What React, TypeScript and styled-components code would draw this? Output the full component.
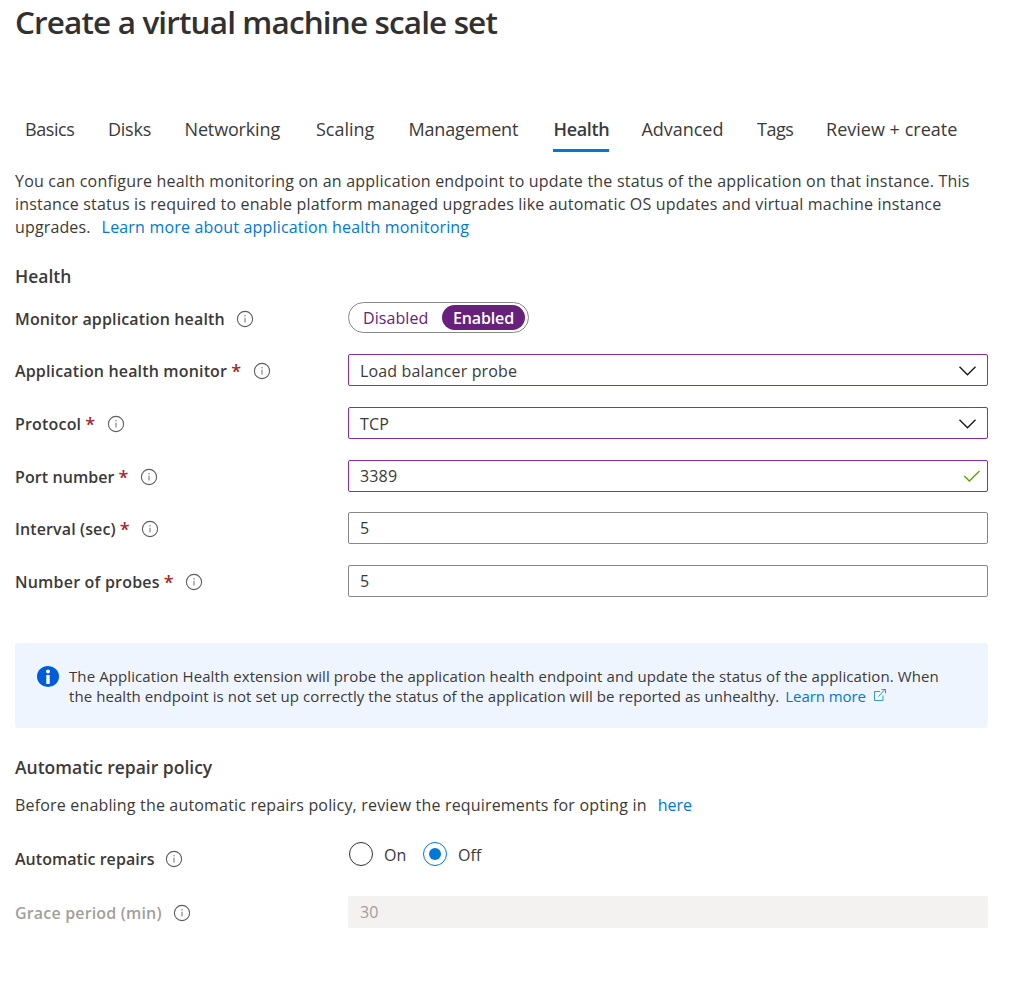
import React from 'react';
import styled, { createGlobalStyle, css } from 'styled-components';

const GlobalStyle = createGlobalStyle`
  *, *::before, *::after { box-sizing: border-box; }
  html, body { margin: 0; background: #fff; }
  body {
    color: #3b3a39;
    font-family: 'Open Sans', 'Noto Sans', sans-serif;
    font-size: 16px;
    font-weight: 400;
  }
`;

const Page = styled.main`
  width: 1025px;
  min-height: 990px;
  padding: 0 37px 0 15px;
  display: flex;
  flex-direction: column;
`;

const Title = styled.h1`
  margin: 0;
  height: 44px;
  color: #323130;
  font-size: 31.5px;
  line-height: 44px;
  font-weight: 600;
  letter-spacing: -0.87px;
  white-space: nowrap;
`;

const Tabs = styled.nav`
  display: flex;
  margin: 70px 0 0 9px;
  height: 38px;
`;

const Tab = styled.a<{ $width: number; $tracking: number; $active?: boolean }>`
  flex: none;
  width: ${(p) => p.$width}px;
  padding-left: 1px;
  font-size: 18px;
  line-height: 30px;
  letter-spacing: ${(p) => p.$tracking}px;
  white-space: nowrap;
  ${(p) =>
    p.$active &&
    css`
      width: 56px;
      margin-right: ${p.$width - 56}px;
      font-weight: 600;
      border-bottom: 3px solid #0078d4;
    `}
`;

const Paragraph = styled.p<{ $top: number }>`
  margin: ${(p) => p.$top}px 0 0;
  line-height: 23px;
`;

const Line = styled.span<{ $tracking: number }>`
  display: block;
  white-space: nowrap;
  letter-spacing: ${(p) => p.$tracking}px;
`;

const Link = styled.a<{ $gap?: number; $tracking?: number }>`
  margin-left: ${(p) => p.$gap ?? 0}px;
  letter-spacing: ${(p) => p.$tracking ?? 0.18}px;
  color: #0078d4;
`;

const SectionTitle = styled.h2<{ $top: number }>`
  margin: ${(p) => p.$top}px 0 0;
  font-size: 17.5px;
  line-height: 26px;
  font-weight: 600;
`;

const Row = styled.div<{ $top: number; $drop?: number }>`
  display: grid;
  grid-template-columns: 333px 640px;
  align-items: start;
  height: 32px;
  margin-top: ${(p) => p.$top}px;
  & > :first-child { margin-top: ${(p) => p.$drop ?? 1}px; }
`;

const Label = styled.label<{ $tracking: number; $disabled?: boolean }>`
  display: flex;
  align-items: center;
  height: 32px;
  font-weight: 600;
  letter-spacing: ${(p) => p.$tracking}px;
  white-space: nowrap;
  color: ${(p) => (p.$disabled ? '#a19f9d' : '#3b3a39')};
  svg { margin-left: 11px; }
`;

const Required = styled.span`
  margin-left: 4px;
  width: 10.6px;
  color: #a4262c;
  font-size: 18px;
`;

const Toggle = styled.div`
  display: flex;
  align-items: center;
  width: 181px;
  height: 31px;
  padding: 2px 3px 2px 14px;
  border: 1px solid #8a8886;
  border-radius: 16px;
  color: #68217a;
`;

const ToggleOption = styled.span<{ $on?: boolean }>`
  flex: none;
  height: 25px;
  line-height: 26px;
  ${(p) =>
    p.$on
      ? css`
          width: 83px;
          margin-left: auto;
          border-radius: 13px;
          background: #68217a;
          color: #fff;
          text-align: center;
          font-weight: 600;
          letter-spacing: -0.15px;
        `
      : css`
          letter-spacing: 0.08px;
        `}
`;

const Field = styled.div<{ $tone?: 'dirty' | 'disabled'; $nudge?: number }>`
  display: flex;
  align-items: center;
  justify-content: space-between;
  height: 32px;
  padding: ${(p) => p.$nudge ?? 0}px 6px 0 11px;
  border: 1px solid ${(p) => (p.$tone === 'dirty' ? '#8a2da5' : '#8a8886')};
  border-radius: 2px;
  letter-spacing: 0.15px;
  ${(p) =>
    p.$tone === 'disabled' &&
    css`
      border-color: #f3f2f1;
      background: #f3f2f1;
      color: #a19f9d;
    `}
`;

const Notice = styled.aside`
  display: flex;
  margin-top: 46px;
  height: 85px;
  padding: 23px 20px 0 22px;
  border-radius: 3px;
  background: #eff5ff;
  font-size: 15px;
  line-height: 20px;
`;

const NoticeText = styled.div`
  margin-left: 10px;
  svg { margin-left: 3px; }
`;

const Radios = styled.div`
  display: flex;
  height: 25px;
  padding: 0 0 0 1px;
  align-items: center;
`;

const Radio = styled.span<{ $checked?: boolean }>`
  display: grid;
  place-items: center;
  width: 24px;
  height: 24px;
  border: 1px solid ${(p) => (p.$checked ? '#0078d4' : '#323130')};
  border-radius: 50%;
  &::after {
    content: '';
    width: 12px;
    height: 12px;
    border-radius: 50%;
    background: ${(p) => (p.$checked ? '#0078d4' : 'transparent')};
  }
`;

const RadioLabel = styled.span`
  width: 50px;
  padding: 2px 0 0 11px;
`;

const InfoIcon = () => (
  <svg width="18" height="18" viewBox="0 0 18 18" fill="none">
    <circle cx="9" cy="9" r="7.6" stroke="#605e5c" strokeWidth="1.1" />
    <path d="M9 7.8v4.6" stroke="#797775" strokeWidth="1.1" />
    <circle cx="9" cy="5.8" r=".75" fill="#797775" />
  </svg>
);

const Chevron = () => (
  <svg width="27" height="16" viewBox="0 0 27 16" fill="none">
    <path d="M5.5 3.7l8 8 8-8" stroke="#1b1a19" strokeWidth="1.4" />
  </svg>
);

const Check = () => (
  <svg width="18" height="16" viewBox="0 0 18 16" fill="none">
    <path d="M1.3 8l5 5L16.5 3" stroke="#57a300" strokeWidth="1.3" />
  </svg>
);

const NoticeIcon = () => (
  <svg width="22" height="22" viewBox="0 0 22 22">
    <ellipse cx="11" cy="10.5" rx="11" ry="10.5" fill="#015cda" />
    <circle cx="11" cy="5.5" r="2" fill="#fff" />
    <path d="M9.3 9h3.4v9H9.3z" fill="#fff" />
  </svg>
);

const ExternalIcon = () => (
  <svg width="14" height="14" viewBox="0 0 14 14" fill="none" stroke="#3999c6" strokeWidth="1">
    <path d="M7 3.5H1.5v9h8.5V7.5M5.5 8.5L12 1.5M8.5 1.5h4v4" />
  </svg>
);

const tabs = [
  { name: 'Basics', width: 83, tracking: -0.42 },
  { name: 'Disks', width: 76.5, tracking: -0.25 },
  { name: 'Networking', width: 131.5, tracking: -0.15 },
  { name: 'Scaling', width: 92.5, tracking: 0 },
  { name: 'Management', width: 145, tracking: -0.16 },
  { name: 'Health', width: 88, tracking: -0.33, active: true },
  { name: 'Advanced', width: 115.5, tracking: -0.03 },
  { name: 'Tags', width: 69, tracking: -0.45 },
  { name: 'Review + create', width: 134, tracking: 0.02 },
];

type Setting = {
  label: string;
  tracking: number;
  top: number;
  value: string;
  dirty?: boolean;
  nudge?: number;
  icon?: React.ReactNode;
};

const settings: Setting[] = [
  { label: 'Application health monitor', tracking: 0.16, top: 20, value: 'Load balancer probe', dirty: true, nudge: 2, icon: <Chevron /> },
  { label: 'Protocol', tracking: 0.18, top: 21, value: 'TCP', dirty: true, nudge: 2, icon: <Chevron /> },
  { label: 'Port number', tracking: 0.08, top: 21, value: '3389', dirty: true, icon: <Check /> },
  { label: 'Interval (sec)', tracking: 0.12, top: 20, value: '5' },
  { label: 'Number of probes', tracking: 0.2, top: 21, value: '5' },
];

export default function App() {
  return (
    <>
      <GlobalStyle />
      <Page>
        <Title>Create a virtual machine scale set</Title>
        <Tabs>
          {tabs.map((t) => (
            <Tab key={t.name} $width={t.width} $tracking={t.tracking} $active={t.active}>
              {t.name}
            </Tab>
          ))}
        </Tabs>

        <Paragraph $top={18}>
          <Line $tracking={0.208}>
            You can configure health monitoring on an application endpoint to update the status of the application on that instance. This
          </Line>
          <Line $tracking={0.176}>
            instance status is required to enable platform managed upgrades like automatic OS updates and virtual machine instance
          </Line>
          <Line $tracking={0.14}>
            upgrades.
            <Link $gap={11} $tracking={0.18}>Learn more about application health monitoring</Link>
          </Line>
        </Paragraph>

        <SectionTitle $top={24}>Health</SectionTitle>
        <Row $top={13}>
          <Label $tracking={0.14}>
            Monitor application health
            <InfoIcon />
          </Label>
          <Toggle>
            <ToggleOption>Disabled</ToggleOption>
            <ToggleOption $on>Enabled</ToggleOption>
          </Toggle>
        </Row>
        {settings.map((s) => (
          <Row key={s.label} $top={s.top}>
            <Label $tracking={s.tracking}>
              {s.label}
              <Required>*</Required>
              <InfoIcon />
            </Label>
            <Field $tone={s.dirty ? 'dirty' : undefined} $nudge={s.nudge}>
              {s.value}
              {s.icon}
            </Field>
          </Row>
        ))}

        <Notice>
          <NoticeIcon />
          <NoticeText>
            <Line $tracking={0.095}>
              The Application Health extension will probe the application health endpoint and update the status of the application. When
            </Line>
            <Line $tracking={0.07}>
              the health endpoint is not set up correctly the status of the application will be reported as unhealthy.
              <Link $gap={6} $tracking={-0.08}>Learn more</Link> <ExternalIcon />
            </Line>
          </NoticeText>
        </Notice>

        <SectionTitle $top={26}>Automatic repair policy</SectionTitle>
        <Paragraph $top={14}>
          <Line $tracking={0.175}>
            Before enabling the automatic repairs policy, review the requirements for opting in
            <Link $gap={11} $tracking={0}>here</Link>
          </Line>
        </Paragraph>

        <Row $top={24} $drop={2}>
          <Label $tracking={0.04}>
            Automatic repairs
            <InfoIcon />
          </Label>
          <Radios>
            <Radio />
            <RadioLabel>On</RadioLabel>
            <Radio $checked />
            <RadioLabel>Off</RadioLabel>
          </Radios>
        </Row>
        <Row $top={23}>
          <Label $tracking={0.17} $disabled>
            Grace period (min)
            <InfoIcon />
          </Label>
          <Field $tone="disabled">30</Field>
        </Row>
      </Page>
    </>
  );
}
